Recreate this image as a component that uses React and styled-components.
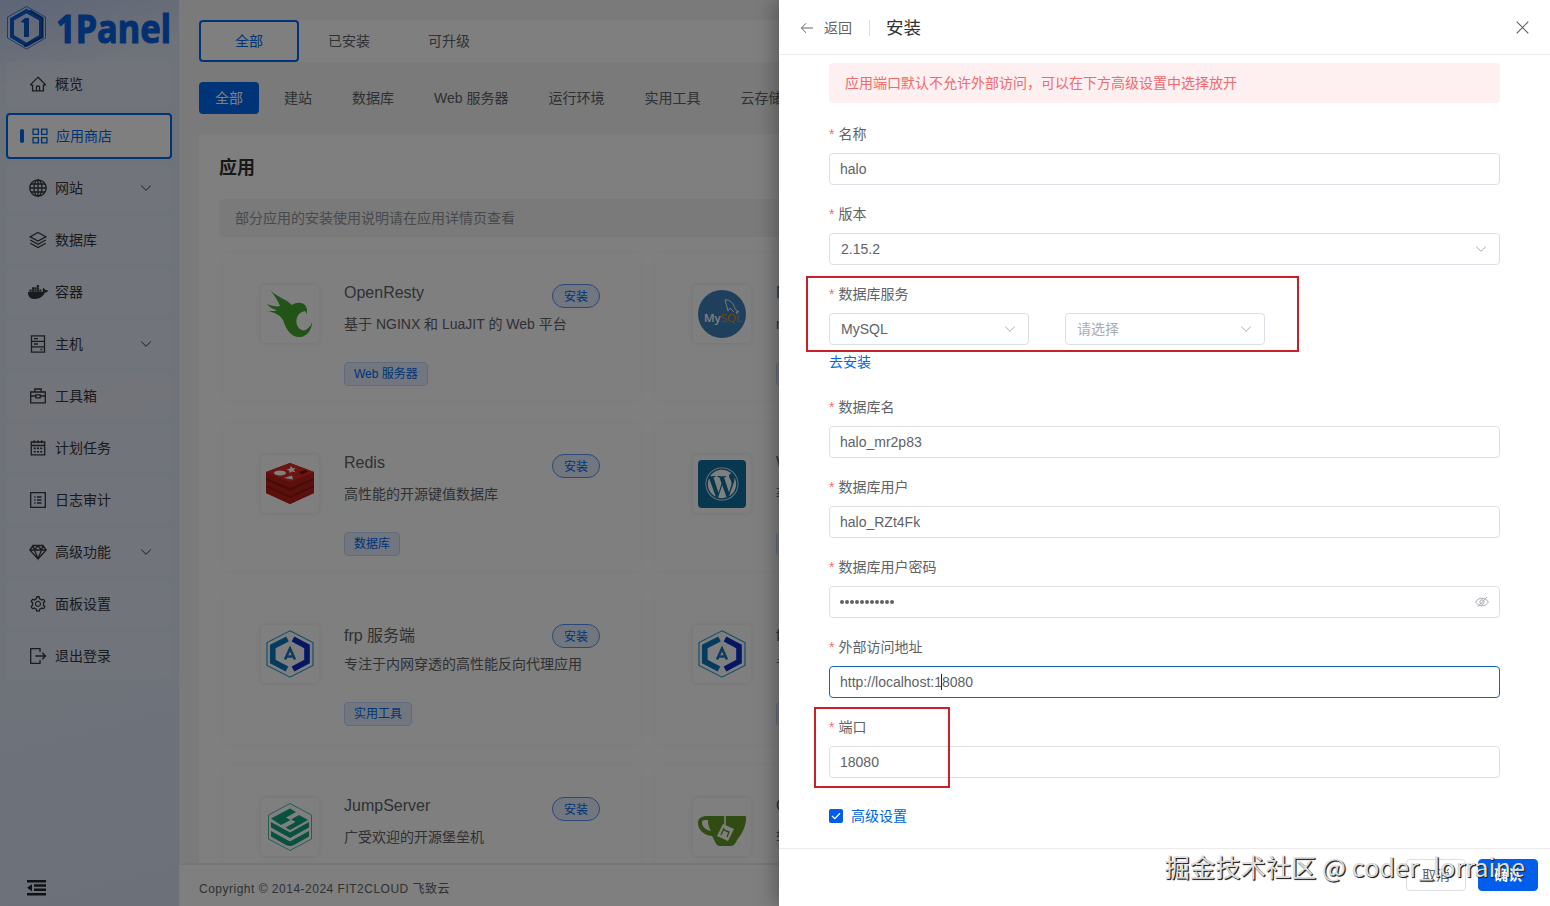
import React from "react";
import styled, { createGlobalStyle } from "styled-components";
import { AiOutlineHome, AiOutlineSetting } from "react-icons/ai";
import { FaDocker, FaWordpress } from "react-icons/fa";

const GlobalStyle = createGlobalStyle`
  * {
    box-sizing: border-box;
  }

  body {
    margin: 0;
    overflow: hidden;
    font-family: "Liberation Sans", "Noto Sans CJK SC", sans-serif;
    font-size: 14px;
    color: #606266;
  }
`;

const Page = styled.div`
  position: relative;
  display: flex;
  width: 1550px;
  height: 906px;
  overflow: hidden;
  background: #f4f4f4;
`;

/* ---------- sidebar ---------- */

const Sidebar = styled.aside`
  display: flex;
  flex-direction: column;
  width: 179px;
  flex-shrink: 0;
  background: linear-gradient(165deg, #bccbee 0%, #dce4f3 9%, #dee5f2 45%, #dce4f3 75%, #d9e2f3 100%);
`;

const Brand = styled.div`
  height: 61px;
  padding: 4px 0 0 5px;
`;

const Menu = styled.nav`
  display: flex;
  flex-direction: column;
  gap: 6px;
  flex: 1;
  padding: 0 7px 0 6px;
`;

const MenuItem = styled.a`
  display: flex;
  align-items: center;
  gap: 8px;
  height: 46px;
  padding: 0 18px 0 ${(p) => (p.$active ? "12px" : "21px")};
  border: 2px solid ${(p) => (p.$active ? "#0068f0" : "transparent")};
  border-radius: 4px;
  background: ${(p) => (p.$active ? "#fff" : "rgba(255, 255, 255, 0.18)")};
  color: ${(p) => (p.$active ? "#0068f0" : "#33363c")};

  svg {
    flex-shrink: 0;
  }
`;

const ActiveMark = styled.i`
  width: 4px;
  height: 14px;
  border-radius: 2px;
  background: #0068f0;
`;

const MenuText = styled.span`
  flex: 1;
  padding-bottom: 2px;
`;

const Collapse = styled.div`
  height: 38px;
  padding: 11px 0 0 26px;
  color: #22252b;
`;

/* ---------- app store ---------- */

const Main = styled.main`
  display: flex;
  flex-direction: column;
  width: 1371px;
  flex-shrink: 0;
  padding-left: 1px;
`;

const Content = styled.div`
  display: flex;
  flex-direction: column;
  height: 863px;
  padding: 20px 20px 0 19px;
`;

const Tabs = styled.div`
  display: flex;
  height: 42px;
  flex-shrink: 0;
  border-radius: 4px;
  background: #fff;
`;

const Tab = styled.div`
  display: flex;
  align-items: center;
  justify-content: center;
  width: 100px;
  padding-bottom: 2px;
  border: 2px solid ${(p) => (p.$active ? "#0068f0" : "transparent")};
  border-radius: 4px;
  color: ${(p) => (p.$active ? "#0068f0" : "#606266")};
`;

const Categories = styled.div`
  display: flex;
  gap: 8px;
  margin: 20px 0;
`;

const Category = styled.div`
  height: 32px;
  padding: 0 16px;
  border-radius: 4px;
  line-height: 32px;
  white-space: nowrap;
  background: ${(p) => (p.$active ? "#0068f0" : "transparent")};
  color: ${(p) => (p.$active ? "#fff" : "#606266")};

  &:first-child {
    margin-right: 1px;
  }
`;

const Panel = styled.section`
  flex: 1;
  min-height: 0;
  overflow: hidden;
  padding: 20px 20px 0;
  border-radius: 4px 4px 0 0;
  background: #fff;
`;

const PanelTitle = styled.h3`
  height: 26px;
  margin: 0 0 19px;
  font-size: 18px;
  line-height: 28px;
  color: #303133;
`;

const Notice = styled.div`
  height: 38px;
  padding: 0 16px;
  border-radius: 4px;
  background: #f4f4f5;
  color: #909399;
  line-height: 38px;
`;

const AppGrid = styled.div`
  display: grid;
  grid-template-columns: 420px 420px;
  gap: 20px 12px;
  padding: 15px 0 0 3px;
`;

const AppCard = styled.article`
  display: flex;
  align-items: flex-start;
  height: ${(p) => (p.$tall ? "153px" : "150px")};
  padding: 31px 41px 0 37px;
  border: 1px solid #fbfbfb;
  border-radius: 4px;
  box-shadow: 0 0 4px rgba(0, 0, 0, 0.03);
`;

const AppLogo = styled.div`
  display: flex;
  align-items: center;
  justify-content: center;
  width: 60px;
  height: 60px;
  flex-shrink: 0;
  border: 1px solid #f4f4f4;
  border-radius: 5px;
  box-shadow: 0 0 4px rgba(0, 0, 0, 0.08);
`;

const AppInfo = styled.div`
  flex: 1;
  padding-left: 24px;
  white-space: nowrap;
`;

const AppHead = styled.div`
  display: flex;
  justify-content: space-between;
  height: 30px;
`;

const AppName = styled.span`
  font-size: 16px;
  line-height: ${(p) => (p.$tall ? "23px" : "18px")};
`;

const InstallButton = styled.button`
  width: 48px;
  height: 24px;
  padding: 0 0 2px;
  border: 1px solid #5790f2;
  border-radius: 12px;
  background: #e2edff;
  color: #0068f0;
  font: inherit;
  font-size: 12px;
`;

const AppDesc = styled.p`
  height: 20px;
  margin: 0 0 28px;
  line-height: 20px;
`;

const Tag = styled.span`
  display: inline-block;
  height: 24px;
  padding: 0 9px;
  border: 1px solid #bfd7fb;
  border-radius: 4px;
  background: #e2edff;
  color: #0068f0;
  font-size: 12px;
  line-height: 22px;
`;

const Copyright = styled.footer`
  height: 43px;
  padding: 4px 0 0 19px;
  border-top: 2px solid #ececec;
  background: #fff;
  font-size: 12px;
  line-height: 40px;
  letter-spacing: 0.5px;
`;

/* ---------- drawer ---------- */

const Mask = styled.div`
  position: absolute;
  inset: 0;
  display: flex;
  justify-content: flex-end;
  background: rgba(0, 0, 0, 0.5);
`;

const Drawer = styled.div`
  position: relative;
  display: flex;
  flex-direction: column;
  width: 771px;
  background: #fff;
  box-shadow: -4px 0 18px rgba(0, 0, 0, 0.3);
`;

const DrawerHeader = styled.header`
  display: flex;
  align-items: center;
  height: 55px;
  padding: 1px 21px 0 21px;
  border-bottom: 1px solid #ebebeb;
`;

const Back = styled.span`
  margin-left: 10px;
  padding-bottom: 2px;
`;

const Divider = styled.i`
  width: 1px;
  height: 16px;
  margin: 0 16px 0 17px;
  background: #dcdfe6;
`;

const DrawerTitle = styled.span`
  flex: 1;
  padding-bottom: 3px;
  font-size: 17.5px;
  color: #303133;
`;

const Form = styled.form`
  display: flex;
  flex-direction: column;
  gap: 18px;
  flex: 1;
  padding: 8px 50px 0;
`;

const Warning = styled.div`
  height: 40px;
  margin-bottom: 2px;
  padding: 0 16px;
  border-radius: 4px;
  background: #feeff0;
  color: #f06a6e;
  line-height: 40px;
`;

const Field = styled.div`
  display: flex;
  flex-direction: column;
`;

const Label = styled.label`
  height: 22px;
  margin-bottom: 8px;
  line-height: 22px;

  &::before {
    content: "*";
    margin-right: 4px;
    color: #f56c6c;
  }
`;

const Control = styled.div`
  display: flex;
  align-items: center;
  justify-content: space-between;
  width: ${(p) => p.$width || "100%"};
  height: 32px;
  padding: 0 ${(p) => (p.$select ? "12px 0 11px" : "10px")};
  border: 1px solid ${(p) => (p.$focus ? "#1a62b8" : "#dcdfe6")};
  border-radius: 4px;
  background: #fff;
  color: ${(p) => (p.$placeholder ? "#a8abb2" : "#606266")};
  line-height: 30px;

  svg {
    color: #a8abb2;
  }
`;

const ControlRow = styled.div`
  display: flex;
  gap: 36px;
`;

const Caret = styled.i`
  display: inline-block;
  width: 1px;
  height: 16px;
  margin: 0 0 0 -1px;
  vertical-align: -3px;
  background: #222;
`;

const Dots = styled.span`
  display: flex;
  gap: 1px;

  i {
    width: 4px;
    height: 4px;
    border-radius: 50%;
    background: #606266;
  }
`;

const InstallLink = styled.a`
  height: 33px;
  line-height: 34px;
  color: #0068e0;
`;

const CheckRow = styled.div`
  display: flex;
  align-items: center;
  gap: 8px;
  height: 40px;
  color: #0062e0;
`;

const CheckText = styled.span`
  padding-bottom: 2px;
`;

const CheckBox = styled.span`
  display: flex;
  width: 14px;
  height: 14px;
  border-radius: 2px;
  background: #005eeb;
`;

const DrawerFooter = styled.footer`
  display: flex;
  justify-content: flex-end;
  gap: 12px;
  height: 58px;
  padding: 10px 12px 0;
  border-top: 1px solid #ebebeb;
`;

const Button = styled.button`
  width: 60px;
  height: 32px;
  padding: 0 0 2px;
  border: 1px solid ${(p) => (p.$primary ? "#005eeb" : "#dcdfe6")};
  border-radius: 4px;
  background: ${(p) => (p.$primary ? "#005eeb" : "#fff")};
  color: ${(p) => (p.$primary ? "#fff" : "#606266")};
  font: inherit;
  font-weight: ${(p) => (p.$primary ? 700 : 400)};
`;

/* red frames and the signature lie over the form */
const Frame = styled.div`
  position: absolute;
  left: ${(p) => p.$x}px;
  top: ${(p) => p.$y}px;
  width: ${(p) => p.$w}px;
  height: ${(p) => p.$h}px;
  border: 2px solid #cb2029;
`;

const Signature = styled.div`
  position: absolute;
  right: 25px;
  bottom: 22px;
  font-family: "Noto Sans CJK SC", sans-serif;
  font-size: 25.3px;
  line-height: 36px;
  white-space: nowrap;
  color: #dedede;
  text-shadow: 1px 1px 1px #222, 1px 1px 0 #444;
`;

/* ---------- drawings ---------- */

const Chevron = ({ size = 12 }) => (
  <svg width={size} height={size} viewBox="0 0 12 12" fill="none" stroke="currentColor">
    <path d="M1.2 3.6 6 8.3l4.8-4.7" />
  </svg>
);

const Line = ({ children, size = 18 }) => (
  <svg width={size} height={size} viewBox="0 0 18 18" fill="none" stroke="currentColor" strokeWidth="1.3">
    {children}
  </svg>
);

const icons = {
  home: <AiOutlineHome size={18} />,
  store: (
    <Line size={16}>
      <path d="M1.2 1.2h6v6h-6zM10.8 1.2h6v6h-6zM1.2 10.8h6v6h-6zM10.8 10.8h6v6h-6z" strokeWidth="1.5" />
    </Line>
  ),
  globe: (
    <Line>
      <circle cx="9" cy="9" r="8.2" />
      <ellipse cx="9" cy="9" rx="4" ry="8.2" />
      <path d="M9 .8v16.4M.8 9h16.4M2 5h14M2 13h14" />
    </Line>
  ),
  layers: (
    <Line>
      <path d="M9 1.5 16.8 5.8 9 10 1.2 5.8zM1.2 9 9 13.2 16.8 9M1.2 12.2 9 16.5l7.8-4.3" />
    </Line>
  ),
  docker: <FaDocker size={20} style={{ margin: "0 -1px" }} />,
  server: (
    <Line>
      <path d="M2.5.8h13v16.4h-13zM2.5 6.3h13M2.5 11.8h13M5 3.6h4M5 9h4M11.5 14.5h1.8" />
    </Line>
  ),
  toolbox: (
    <Line>
      <path d="M1.7 5h14.6v10.8H1.7zM5.8 5V2h6.4v3M1.7 9h5M11.3 9h5M6.8 7.8h4.4v3H6.8z" />
    </Line>
  ),
  calendar: (
    <Line>
      <path d="M2.3 3h13.4v12.8H2.3zM2.3 6.5h13.4M5.2 1.2v3M9 1.2v3M12.8 1.2v3" />
      <path d="M4.8 9.4h2M8 9.4h2M11.2 9.4h2M4.8 12.7h2M8 12.7h2M11.2 12.7h2" strokeWidth="1.6" />
    </Line>
  ),
  log: (
    <Line>
      <path d="M1.7 1.7h14.6v14.6H1.7zM8 6h4.5M8 9h4.5M8 12h4.5M5.3 6h1.3M5.3 9h1.3M5.3 12h1.3" />
    </Line>
  ),
  diamond: (
    <Line>
      <path d="M4 2.5h10L17.2 7 9 16 .8 7zM.8 7h16.4M5.5 7 9 16l3.5-9M4 2.5 5.5 7 9 2.8 12.5 7 14 2.5" />
    </Line>
  ),
  setting: <AiOutlineSetting size={18} />,
  logout: (
    <Line>
      <path d="M11 5V1.7H1.7v14.6H11V13M6.5 9h10M13.3 5.8 16.5 9l-3.2 3.2" />
    </Line>
  ),
};

const BrandLogo = () => (
  <svg width="174" height="54" viewBox="0 0 174 54">
    <path d="M21.500 2.500 40.500 13v21L21.500 45 2.500 34V13z" fill="none" stroke="#3478d8" strokeWidth="1" />
    <path d="M21.500 7 36 15.300v17L21.500 41 7 32.300v-17z" fill="none" stroke="#0a5cd0" strokeWidth="4" />
    <path d="M25 6.500 37.500 14v19L19 42" fill="none" stroke="#0c3f98" strokeWidth="2" />
    <path d="M15.500 18 20 14h4v19h-5V18.800z" fill="#0a58c4" />
    <text
      x="51"
      y="38.500"
      textLength="115"
      lengthAdjust="spacingAndGlyphs"
      fontFamily="Noto Sans, Open Sans, sans-serif"
      fontSize="38.500"
      fontWeight="700"
      fill="#0560e0"
      stroke="#0560e0"
      strokeWidth="1"
    >
      1Panel
    </text>
  </svg>
);

const FrpLogo = () => (
  <svg width="48" height="48" viewBox="0 0 48 48" fill="none">
    <path d="M24 .8 47 12.500v23L24 47.200 1 35.500v-23z" stroke="#2c9cd0" strokeWidth="1.200" />
    <path d="M21.500 9 6.800 16.500v15L21 39" stroke="#0878c0" strokeWidth="5.600" />
    <path d="M27 9 41 16.500v15L27 39" stroke="#0a2cc8" strokeWidth="5.600" />
    <path d="M19 29.500 24 18.500l5 11M21 26.500h6" stroke="#1874bc" strokeWidth="2.500" />
  </svg>
);

const logos = {
  openresty: (
    <svg width="48" height="48" viewBox="0 0 48 48">
      <path
        d="M4 0c7 7 16 9 22 15 4-3 10-3 13 0l2 4v5l-2-3c-7 1-10 8-8 14 2 5 7 7 10 4 3-2 4-4 5-7 0 8-5 14-11 15-11 1-15-9-18-17-3-5-7-7-15-9 4 0 8 0 10-1C9 20 4 18 1 14c5 2 10 3 13 2C12 11 9 6 4 0z"
        fill="#43a82c"
      />
    </svg>
  ),
  redis: (
    <svg width="48" height="48" viewBox="0 0 48 48">
      <path d="M0 15v18l24 11 24-11V15z" fill="#8d1712" />
      <path d="M0 27v6l24 11 24-11v-6L24 38zM0 20v5l24 11 24-11v-5L24 31z" fill="#b82019" />
      <path d="M24 3 48 12v6L24 28 0 18v-6z" fill="#b82019" />
      <path d="M24 3 48 12 24 22 0 12z" fill="#d72c25" />
      <ellipse cx="14" cy="13" rx="6" ry="2.400" fill="#fff" />
      <path d="m25 6 1.600 2.300 3-.2-2 2 1.800 2.200-3.500-.7-2.400 1.500-.2-2.600-3.200-1 3.700-.8zM18 18l9 1.600-1-4z" fill="#fff" />
      <path d="m33 12 6-2 3 1.500-6 3z" fill="#7a0c00" />
    </svg>
  ),
  frp: <FrpLogo />,
  jumpserver: (
    <svg width="46" height="50" viewBox="0 0 46 50" fill="none">
      <path d="M23 1.500 44.500 13v24L23 48.500 1.500 37V13z" stroke="#35b394" strokeWidth=".9" />
      <path d="m4 16.500 19-10 6 3.500-10 5.500 4 2.500 9-5 9 5-18 10-4.500-2.600 10-5.400-4-2.400-10.500 5.500z" fill="#10a37f" />
      <path d="m4 20 19 10.500L42 20v5.500L23 36 4 25.500zM4 29l19 10.500L42 29v5.500L27 43q-4 2-8 0L4 34.500z" fill="#10a37f" />
    </svg>
  ),
  mysql: (
    <svg width="48" height="48" viewBox="0 0 48 48">
      <circle cx="24" cy="24" r="24" fill="#3f80b8" />
      <text x="6" y="31.500" fontFamily="Open Sans, sans-serif" fontSize="11.500" fontWeight="600" fill="#fff">
        My<tspan fill="#e48e00" fontWeight="400">SQL</tspan>
      </text>
      <path d="M27 10c5-1 9 4 10 9l4 3h-3l1 2M27 10l2 7 1 4 2-3 4 4" fill="none" stroke="#fff" strokeWidth=".9" />
    </svg>
  ),
  wordpress: (
    <svg width="48" height="48" viewBox="0 0 48 48">
      <rect width="48" height="48" rx="4" fill="#11709f" />
      <FaWordpress x="7" y="7" size={34} color="#fff" />
    </svg>
  ),
  gitea: (
    <svg width="50" height="50" viewBox="0 0 50 50">
      <path d="M10 14h37c3 0 2 2 2 4-1 9-5 15-9 20-2 5-4 6-7 6H23c-4 0-5-5-8-10C6 33 1 27 1 21c0-5 4-7 9-7z" fill="#609926" />
      <path d="M5 20c0-2 3-2 6-2 0 5 1 8 3 11-5-1-9-4-9-9z" fill="#fff" />
      <path d="M28 14v10" stroke="#fff" strokeWidth="1.600" />
      <path d="m26 22 11 5-6 12-11-5z" fill="#fff" />
      <path d="m27 26-3 7M27 28l5 2-2 5" fill="none" stroke="#609926" strokeWidth="1.400" />
    </svg>
  ),
};

const menu = [
  { text: "概览", icon: "home" },
  { text: "应用商店", icon: "store", active: true },
  { text: "网站", icon: "globe", more: true },
  { text: "数据库", icon: "layers" },
  { text: "容器", icon: "docker" },
  { text: "主机", icon: "server", more: true },
  { text: "工具箱", icon: "toolbox" },
  { text: "计划任务", icon: "calendar" },
  { text: "日志审计", icon: "log" },
  { text: "高级功能", icon: "diamond", more: true },
  { text: "面板设置", icon: "setting" },
  { text: "退出登录", icon: "logout" },
];

const categories = ["全部", "建站", "数据库", "Web 服务器", "运行环境", "实用工具", "云存储"];

const apps = [
  { name: "OpenResty", desc: "基于 NGINX 和 LuaJIT 的 Web 平台", tag: "Web 服务器", logo: "openresty" },
  { name: "MySQL", desc: "mysql 数据库", tag: "数据库", logo: "mysql" },
  { name: "Redis", desc: "高性能的开源键值数据库", tag: "数据库", logo: "redis" },
  { name: "WordPress", desc: "著名的开源博客软件", tag: "建站", logo: "wordpress" },
  { name: "frp 服务端", desc: "专注于内网穿透的高性能反向代理应用", tag: "实用工具", logo: "frp", tall: true },
  { name: "frp 客户端", desc: "专注于内网穿透的应用", tag: "实用工具", logo: "frp", tall: true },
  { name: "JumpServer", desc: "广受欢迎的开源堡垒机", logo: "jumpserver" },
  { name: "Gitea", desc: "轻量的代码托管平台", logo: "gitea" },
];

const Input = ({ label, children, ...rest }) => (
  <Field>
    <Label>{label}</Label>
    <Control {...rest}>{children}</Control>
  </Field>
);

const SideMenu = () => (
  <Sidebar>
    <Brand>
      <BrandLogo />
    </Brand>
    <Menu>
      {menu.map((item) => (
        <MenuItem key={item.text} $active={item.active}>
          {item.active && <ActiveMark />}
          {icons[item.icon]}
          <MenuText>{item.text}</MenuText>
          {item.more && <Chevron />}
        </MenuItem>
      ))}
    </Menu>
    <Collapse>
      <svg width="21" height="17" viewBox="0 0 21 17" fill="currentColor">
        <path d="M1 1h19v2.500H1zM8 5.300h12v2.400H8zM8 9.600h12V12H8zM1 14h19v2.500H1zM1 8.700l5-3.500v7z" />
      </svg>
    </Collapse>
  </Sidebar>
);

const AppStore = () => (
  <Main>
    <Content>
      <Tabs>
        <Tab $active>全部</Tab>
        <Tab>已安装</Tab>
        <Tab>可升级</Tab>
      </Tabs>
      <Categories>
        {categories.map((name, index) => (
          <Category key={name} $active={index === 0}>
            {name}
          </Category>
        ))}
      </Categories>
      <Panel>
        <PanelTitle>应用</PanelTitle>
        <Notice>部分应用的安装使用说明请在应用详情页查看</Notice>
        <AppGrid>
          {apps.map((app) => (
            <AppCard key={app.name} $tall={app.tall}>
              <AppLogo>{logos[app.logo]}</AppLogo>
              <AppInfo>
                <AppHead>
                  <AppName $tall={app.tall}>{app.name}</AppName>
                  <InstallButton>安装</InstallButton>
                </AppHead>
                <AppDesc>{app.desc}</AppDesc>
                {app.tag && <Tag>{app.tag}</Tag>}
              </AppInfo>
            </AppCard>
          ))}
        </AppGrid>
      </Panel>
    </Content>
    <Copyright>Copyright © 2014-2024 FIT2CLOUD 飞致云</Copyright>
  </Main>
);

const InstallDrawer = () => (
  <Drawer>
    <DrawerHeader>
      <svg width="14" height="14" viewBox="0 0 14 14" fill="none" stroke="#606266">
        <path d="M13 7H1.500M6 2.300 1.300 7 6 11.700" />
      </svg>
      <Back>返回</Back>
      <Divider />
      <DrawerTitle>安装</DrawerTitle>
      <svg width="13" height="13" viewBox="0 0 13 13" fill="none" stroke="#606266" strokeWidth="1.200">
        <path d="m.7.7 11.600 11.600M12.300.7.7 12.300" />
      </svg>
    </DrawerHeader>
    <Form>
      <Warning>应用端口默认不允许外部访问，可以在下方高级设置中选择放开</Warning>
      <Input label="名称">halo</Input>
      <Input label="版本" $select>
        2.15.2
        <Chevron />
      </Input>
      <Field>
        <Label>数据库服务</Label>
        <ControlRow>
          <Control $select $width="200px">
            MySQL
            <Chevron />
          </Control>
          <Control $select $placeholder $width="200px">
            请选择
            <Chevron />
          </Control>
        </ControlRow>
        <InstallLink>去安装</InstallLink>
      </Field>
      <Input label="数据库名">halo_mr2p83</Input>
      <Input label="数据库用户">halo_RZt4Fk</Input>
      <Input label="数据库用户密码">
        <Dots>
          {Array.from({ length: 11 }, (_, i) => (
            <i key={i} />
          ))}
        </Dots>
        <svg width="14" height="14" viewBox="0 0 14 14" fill="none" stroke="currentColor">
          <path d="M.6 7C3.500 2 10.500 2 13.400 7 10.500 12 3.500 12 .6 7zM12 2 2.500 12" />
          <circle cx="7" cy="7" r="2.200" />
        </svg>
      </Input>
      <Input label="外部访问地址" $focus>
        <span>
          http://localhost:1
          <Caret />
          8080
        </span>
      </Input>
      <Input label="端口">18080</Input>
      <CheckRow>
        <CheckBox>
          <svg width="14" height="14" viewBox="0 0 14 14" fill="none" stroke="#fff" strokeWidth="1.300">
            <path d="m3 7 2.800 2.700L11 4.300" />
          </svg>
        </CheckBox>
        <CheckText>高级设置</CheckText>
      </CheckRow>
    </Form>
    <DrawerFooter>
      <Button>取消</Button>
      <Button $primary>确认</Button>
    </DrawerFooter>
    <Frame $x={27} $y={276} $w={493} $h={76} />
    <Frame $x={35} $y={707} $w={136} $h={81} />
    <Signature>掘金技术社区 @ coder_lorraine</Signature>
  </Drawer>
);

const App = () => {
  return (
    <Page>
      <GlobalStyle />
      <SideMenu />
      <AppStore />
      <Mask>
        <InstallDrawer />
      </Mask>
    </Page>
  );
};

export default App;
